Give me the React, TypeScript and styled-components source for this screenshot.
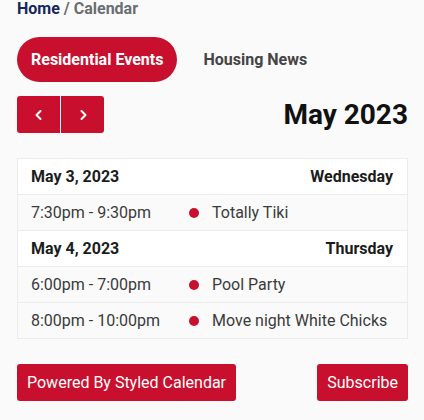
import styled, { createGlobalStyle } from 'styled-components';

const RED = '#c8102e';

const GlobalStyle = createGlobalStyle`
  html, body { margin: 0; padding: 0; background: #fafafb; }
  body { font-family: Roboto, "Liberation Sans", sans-serif; color: #222; }
`;

const Page = styled.div`
  padding: 0 16px 0 17px;
  display: flex;
  flex-direction: column;
`;

const Crumbs = styled.div`
  font-size: 16px;
  font-weight: 700;
  line-height: 18px;
  color: #6b6e72;
  a { color: #14285c; text-decoration: none; }
`;

const Tabs = styled.div`
  display: flex;
  gap: 12px;
  margin-top: 19px;
`;

const Tab = styled.button<{ $active?: boolean }>`
  border: none;
  border-radius: 23px;
  height: 45px;
  padding: 0 14px;
  font-family: inherit;
  font-size: 16px;
  font-weight: 700;
  background: ${(p) => (p.$active ? RED : 'transparent')};
  color: ${(p) => (p.$active ? '#fff' : '#444')};
`;

const Bar = styled.div`
  display: flex;
  align-items: center;
  justify-content: space-between;
  margin-top: 14px;
`;

const NavGroup = styled.div`
  display: flex;
  gap: 1px;
  border-radius: 3px;
  overflow: hidden;
`;

const NavBtn = styled.button`
  width: 43px;
  height: 37px;
  border: none;
  background: ${RED};
  display: flex;
  align-items: center;
  justify-content: center;
  padding: 0;
`;

const Month = styled.h2`
  margin: 0;
  font-size: 28px;
  font-weight: 700;
  color: #111;
`;

const Table = styled.div`
  margin-top: 25px;
  border: 1px solid #ececec;
  display: flex;
  flex-direction: column;
`;

const DayRow = styled.div<{ $first?: boolean }>`
  display: flex;
  justify-content: space-between;
  align-items: center;
  height: 35px;
  padding: 0 14px 0 13px;
  background: #fff;
  font-size: 16px;
  font-weight: 700;
  color: #1c1c1c;
  border-top: ${(p) => (p.$first ? 'none' : '1px solid #ececec')};
`;

const EventRow = styled.div`
  display: grid;
  grid-template-columns: 158px 23px 1fr;
  align-items: center;
  height: 35px;
  padding: 0 14px 0 13px;
  border-top: 1px solid #ececec;
  background: #fafafa;
  font-size: 16px;
  color: #3a3a3a;
`;

const Dot = styled.span`
  width: 10px;
  height: 10px;
  border-radius: 50%;
  background: ${RED};
`;

const Footer = styled.div`
  display: flex;
  justify-content: space-between;
  margin-top: 25px;
`;

const RedBtn = styled.button`
  height: 37px;
  border: none;
  border-radius: 3px;
  background: ${RED};
  color: #fff;
  font-family: inherit;
  font-size: 16px;
  padding: 0 10px;
`;

const Chevron = ({ left }: { left?: boolean }) => (
  <svg width="12" height="12" viewBox="0 0 12 12">
    <path
      d={left ? 'M7.5 2 L3.5 6 L7.5 10' : 'M4.5 2 L8.5 6 L4.5 10'}
      fill="none"
      stroke="#fff"
      strokeWidth="2"
      strokeLinecap="round"
      strokeLinejoin="round"
    />
  </svg>
);

const days = [
  { date: 'May 3, 2023', weekday: 'Wednesday', events: [{ time: '7:30pm - 9:30pm', title: 'Totally Tiki' }] },
  {
    date: 'May 4, 2023',
    weekday: 'Thursday',
    events: [
      { time: '6:00pm - 7:00pm', title: 'Pool Party' },
      { time: '8:00pm - 10:00pm', title: 'Move night White Chicks' },
    ],
  },
];

export default function App() {
  return (
    <>
      <GlobalStyle />
      <Page>
        <Crumbs>
          <a href="#">Home</a> / Calendar
        </Crumbs>
        <Tabs>
          <Tab $active>Residential Events</Tab>
          <Tab>Housing News</Tab>
        </Tabs>
        <Bar>
          <NavGroup>
            <NavBtn><Chevron left /></NavBtn>
            <NavBtn><Chevron /></NavBtn>
          </NavGroup>
          <Month>May 2023</Month>
        </Bar>
        <Table>
          {days.map((d, i) => (
            <div key={d.date}>
              <DayRow $first={i === 0}>
                <span>{d.date}</span>
                <span>{d.weekday}</span>
              </DayRow>
              {d.events.map((e) => (
                <EventRow key={e.time}>
                  <span>{e.time}</span>
                  <Dot />
                  <span>{e.title}</span>
                </EventRow>
              ))}
            </div>
          ))}
        </Table>
        <Footer>
          <RedBtn>Powered By Styled Calendar</RedBtn>
          <RedBtn>Subscribe</RedBtn>
        </Footer>
      </Page>
    </>
  );
}
